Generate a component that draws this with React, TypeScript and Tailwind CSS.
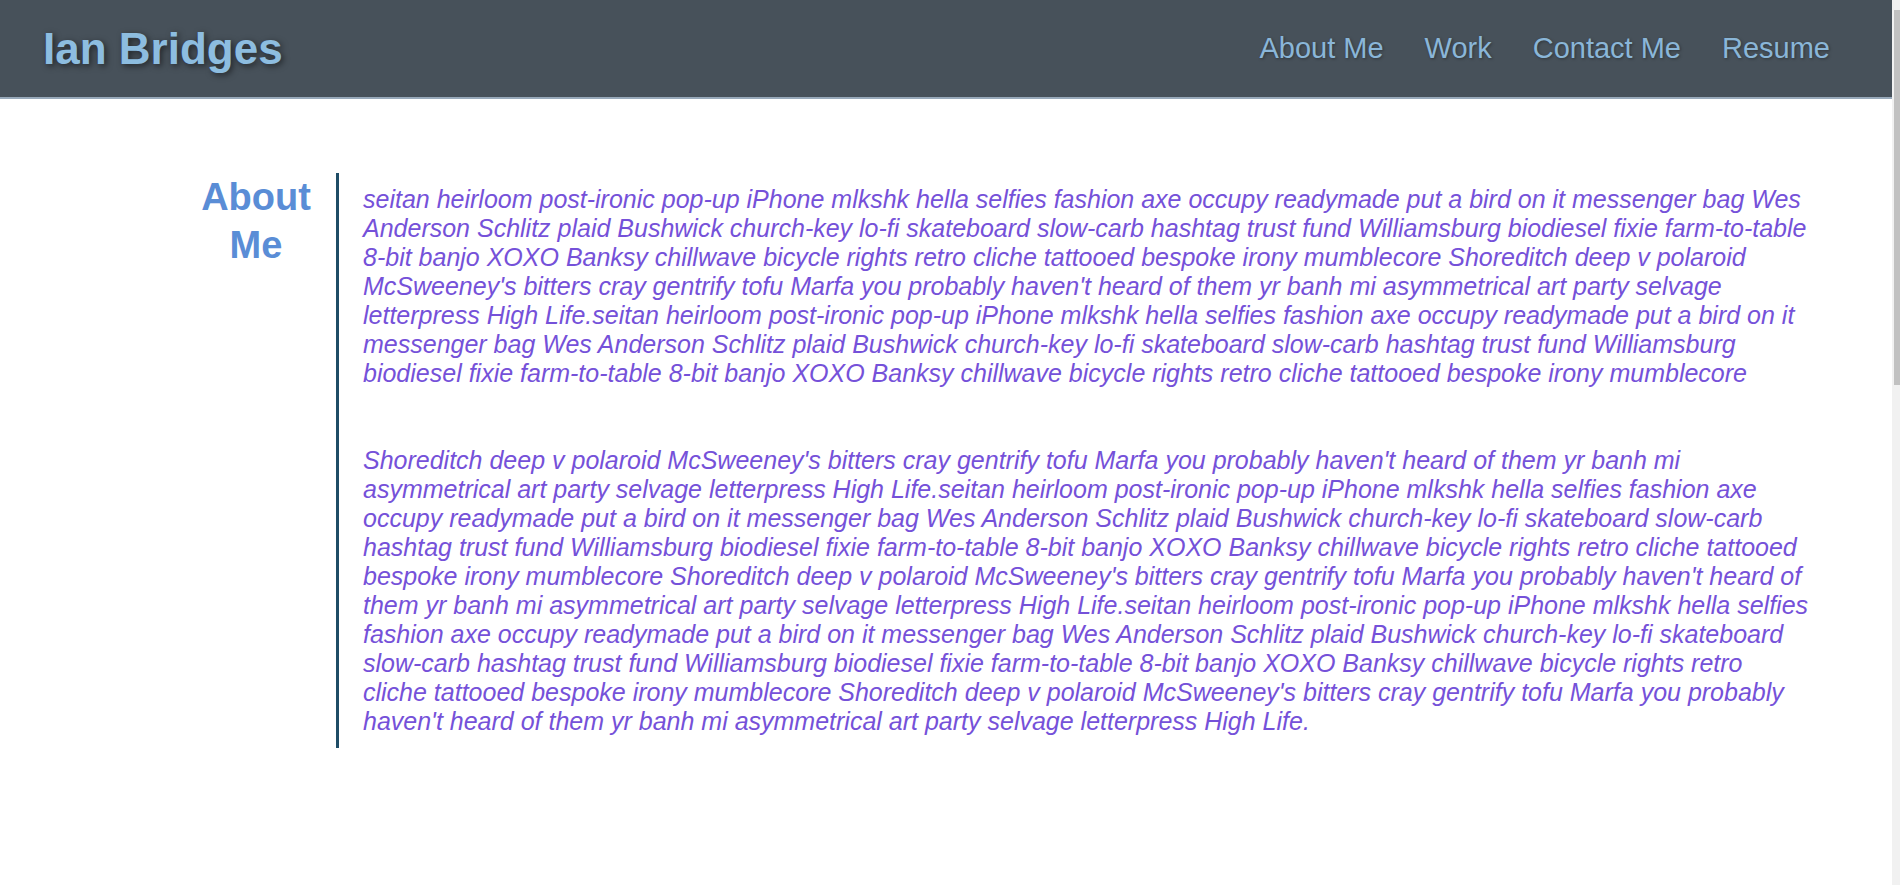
import React from 'react';

const para1 =
  "seitan heirloom post-ironic pop-up iPhone mlkshk hella selfies fashion axe occupy readymade put a bird on it messenger bag Wes Anderson Schlitz plaid Bushwick church-key lo-fi skateboard slow-carb hashtag trust fund Williamsburg biodiesel fixie farm-to-table 8-bit banjo XOXO Banksy chillwave bicycle rights retro cliche tattooed bespoke irony mumblecore Shoreditch deep v polaroid McSweeney's bitters cray gentrify tofu Marfa you probably haven't heard of them yr banh mi asymmetrical art party selvage letterpress High Life.seitan heirloom post-ironic pop-up iPhone mlkshk hella selfies fashion axe occupy readymade put a bird on it messenger bag Wes Anderson Schlitz plaid Bushwick church-key lo-fi skateboard slow-carb hashtag trust fund Williamsburg biodiesel fixie farm-to-table 8-bit banjo XOXO Banksy chillwave bicycle rights retro cliche tattooed bespoke irony mumblecore";

const para2 =
  "Shoreditch deep v polaroid McSweeney's bitters cray gentrify tofu Marfa you probably haven't heard of them yr banh mi asymmetrical art party selvage letterpress High Life.seitan heirloom post-ironic pop-up iPhone mlkshk hella selfies fashion axe occupy readymade put a bird on it messenger bag Wes Anderson Schlitz plaid Bushwick church-key lo-fi skateboard slow-carb hashtag trust fund Williamsburg biodiesel fixie farm-to-table 8-bit banjo XOXO Banksy chillwave bicycle rights retro cliche tattooed bespoke irony mumblecore Shoreditch deep v polaroid McSweeney's bitters cray gentrify tofu Marfa you probably haven't heard of them yr banh mi asymmetrical art party selvage letterpress High Life.seitan heirloom post-ironic pop-up iPhone mlkshk hella selfies fashion axe occupy readymade put a bird on it messenger bag Wes Anderson Schlitz plaid Bushwick church-key lo-fi skateboard slow-carb hashtag trust fund Williamsburg biodiesel fixie farm-to-table 8-bit banjo XOXO Banksy chillwave bicycle rights retro cliche tattooed bespoke irony mumblecore Shoreditch deep v polaroid McSweeney's bitters cray gentrify tofu Marfa you probably haven't heard of them yr banh mi asymmetrical art party selvage letterpress High Life.";

const navLinks = ['About Me', 'Work', 'Contact Me', 'Resume'];

export default function App() {
  return (
    <div className="min-h-screen bg-white font-['Liberation_Sans',Arial,sans-serif]">
      <div className="mr-[8px]">
        {/* Header */}
        <header className="h-[99px] bg-[#47515a] border-b-2 border-[#98a9ba] flex items-center justify-between pl-[43px] pr-[62px]">
          <h1 className="text-[44px] font-bold text-[#8dbde0] leading-none [text-shadow:2px_2px_6px_rgba(0,0,0,0.55)]">
            Ian Bridges
          </h1>
          <nav className="flex items-center gap-[41px]">
            {navLinks.map((link) => (
              <a
                key={link}
                href="#"
                className="text-[29px] text-[#8ab6d8] leading-none [text-shadow:1px_1px_3px_rgba(0,0,0,0.35)]"
              >
                {link}
              </a>
            ))}
          </nav>
        </header>

        {/* About section */}
        <section className="flex pt-[74px] pl-[176px]">
          <h2 className="w-[160px] text-center text-[38px] leading-[48px] font-bold text-[#5a8dd6]">
            About Me
          </h2>
          <div className="border-l-[3px] border-[#1f4d66] pl-[24px] pt-[12px] pb-[12px]">
            <p className="w-[1447px] text-[25px] leading-[29px] italic text-[#7551d9]">{para1}</p>
            <p className="w-[1447px] mt-[58px] text-[25px] leading-[29px] italic text-[#7551d9]">{para2}</p>
          </div>
        </section>
      </div>

      {/* scrollbar strip */}
      <div className="fixed top-0 right-0 h-screen w-[8px] bg-[#f1f1f1]">
        <div className="mt-[10px] ml-[2px] h-[375px] w-[6px] bg-[#c1c1c1]" />
      </div>
    </div>
  );
}
